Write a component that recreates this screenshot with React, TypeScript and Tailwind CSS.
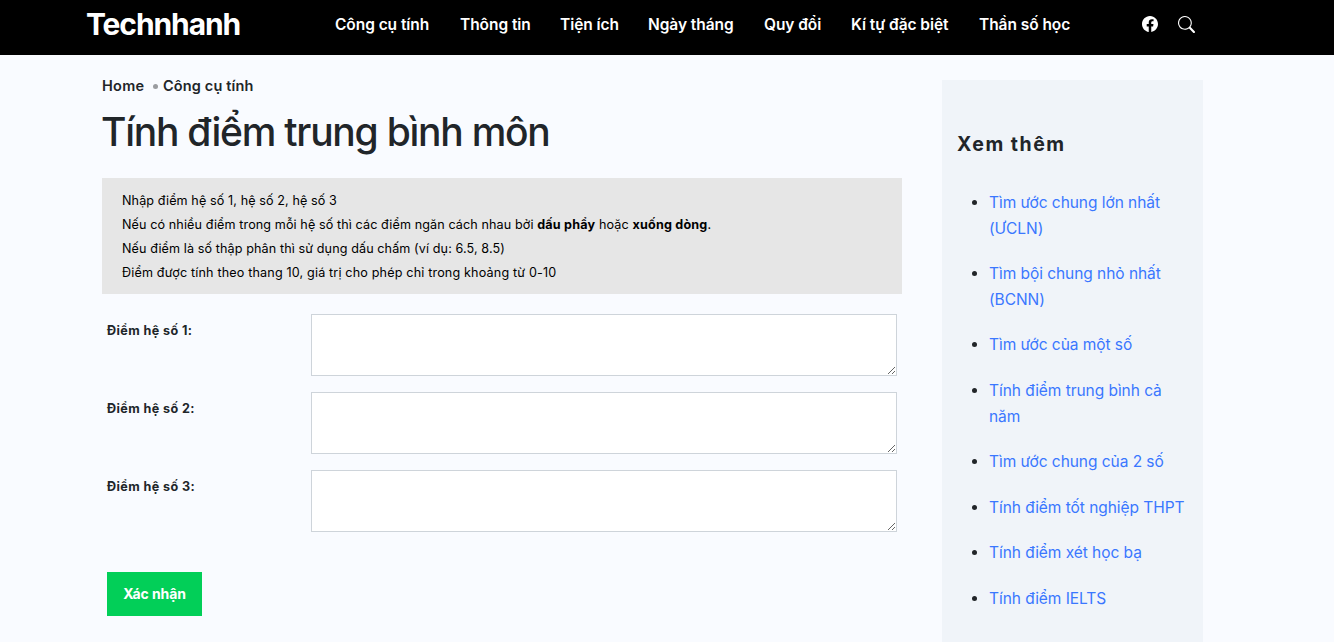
import { BsFacebook, BsSearch } from "react-icons/bs";

const navItems = [
  { label: "Công cụ tính", width: "w-[95px]" },
  { label: "Thông tin", width: "w-[70px]" },
  { label: "Tiện ích", width: "w-[58px]" },
  { label: "Ngày tháng", width: "w-[86px]" },
  { label: "Quy đổi", width: "w-[57px]" },
  { label: "Kí tự đặc biệt", width: "w-[98px]" },
  { label: "Thần số học", width: "w-[92px]" },
];

const scoreFields = ["Điểm hệ số 1:", "Điểm hệ số 2:", "Điểm hệ số 3:"];

const relatedLinks = [
  "Tìm ước chung lớn nhất (ƯCLN)",
  "Tìm bội chung nhỏ nhất (BCNN)",
  "Tìm ước của một số",
  "Tính điểm trung bình cả năm",
  "Tìm ước chung của 2 số",
  "Tính điểm tốt nghiệp THPT",
  "Tính điểm xét học bạ",
  "Tính điểm IELTS",
];

function Header() {
  return (
    <header className="flex h-[55px] bg-black pl-[86px] text-white">
      <a href="#" className="w-[249px] text-[30px] leading-[48px] font-bold tracking-[-1.1px]">
        Technhanh
      </a>
      <nav className="flex gap-[30px]">
        {navItems.map((item) => (
          <a
            key={item.label}
            href="#"
            className={`${item.width} text-[15.5px] leading-[49px] font-semibold tracking-[-0.06px] whitespace-nowrap`}
          >
            {item.label}
          </a>
        ))}
      </nav>
      <div className="ml-[71px] flex h-12 items-center gap-5">
        <a href="#"><BsFacebook size={16} /></a>
        <button><BsSearch size={17} /></button>
      </div>
    </header>
  );
}

function Breadcrumb() {
  return (
    <div className="flex items-center text-[14.5px] leading-6 font-semibold">
      <a href="#" className="w-[51px] tracking-[0.3px]">Home</a>
      <span className="mt-px mr-[5px] size-[5px] rounded-full bg-[#9a9ca0]" />
      <a href="#" className="tracking-[0.15px]">Công cụ tính</a>
    </div>
  );
}

function ScoreForm() {
  return (
    <form className="px-[5px] pt-5">
      {scoreFields.map((label) => (
        <div key={label} className="mb-4 flex h-[62px]">
          <label className="w-[204px] pt-1.5 text-[12.6px] leading-[21px] font-bold tracking-[0.4px]">{label}</label>
          <textarea className="h-[62px] w-[586px] resize border border-[#ced4da] bg-white p-2 outline-none" />
        </div>
      ))}
      <button
        type="button"
        className="mt-6 h-11 w-[95px] bg-[#02cf58] text-sm font-bold tracking-[-0.1px] text-white"
      >
        Xác nhận
      </button>
    </form>
  );
}

function Sidebar() {
  return (
    <aside className="w-[261px] bg-[#f0f4f9] pt-[52px] pr-4 pl-[15px]">
      <h2 className="text-[19.5px] leading-6 font-bold tracking-[1.5px]">Xem thêm</h2>
      <ul className="mt-[34px] list-disc pl-8 text-[15.5px]">
        {relatedLinks.map((link) => (
          <li key={link} className="mb-5 leading-[25.6px]">
            <a href="#" className="tracking-[-0.05px] text-[#3a77ff]">{link}</a>
          </li>
        ))}
      </ul>
    </aside>
  );
}

export default function App() {
  return (
    <div className="flex h-[642px] flex-col overflow-hidden bg-[#f9fbff] font-['Inter','Noto_Sans',sans-serif] text-[#212529]">
      <Header />
      <div className="flex flex-1 gap-10 pt-[25px] pl-[102px]">
        <main className="w-[800px]">
          <div className="-mt-1.5">
            <Breadcrumb />
          </div>
          <h1 className="mt-2.5 -ml-px text-[39px] leading-12 font-medium tracking-[-1.25px]">
            Tính điểm trung bình môn
          </h1>
          <div className="mt-[22px] h-[116px] bg-[#e6e6e6] px-5 pt-[11px] text-[12.6px] leading-6 tracking-[0.1px] text-black">
            <p>Nhập điểm hệ số 1, hệ số 2, hệ số 3</p>
            <p>
              Nếu có nhiều điểm trong mỗi hệ số thì các điểm ngăn cách nhau bởi{" "}
              <b className="tracking-[0.2px]">dấu phẩy</b> hoặc <b className="tracking-[0.2px]">xuống dòng</b>.
            </p>
            <p>Nếu điểm là số thập phân thì sử dụng dấu chấm (ví dụ: 6.5, 8.5)</p>
            <p className="tracking-[0.16px]">Điểm được tính theo thang 10, giá trị cho phép chỉ trong khoảng từ 0-10</p>
          </div>
          <ScoreForm />
        </main>
        <Sidebar />
      </div>
    </div>
  );
}
